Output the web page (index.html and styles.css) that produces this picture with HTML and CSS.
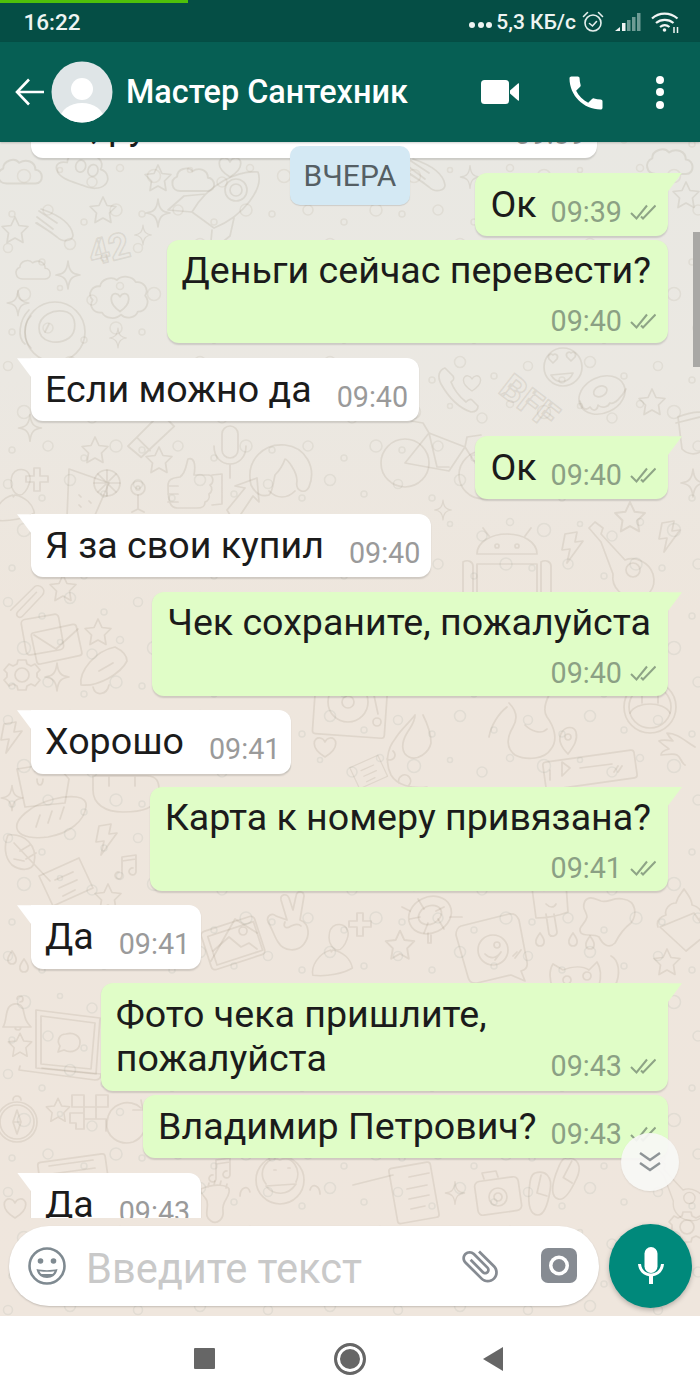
FILE: index.html
```html
<!DOCTYPE html>
<html lang="ru">
<head>
<meta charset="utf-8">
<title>Мастер Сантехник</title>
<link rel="stylesheet" href="styles.css">
</head>
<body>
<div class="phone">
  <div class="status">
    <div class="progress"></div>
    <span class="clock">16:22</span>
    <div class="status-right">
      <span class="more-dots"><i></i><i></i><i></i></span>
      <span class="speed">5,3 КБ/с</span>
      <svg class="st-alarm" width="22" height="22" viewBox="0 0 22 22" fill="none" stroke="#e6efed" stroke-width="1.6"><circle cx="11" cy="12" r="8"/><path d="M7.500 12.500l3 2.500 4-4.500M1.500 5.500L5.500 1.500M20.500 5.500L16.500 1.500" stroke-linecap="round"/></svg>
      <svg class="st-signal" width="28" height="20" viewBox="0 0 28 20"><path d="M1 19l5-4v4z" fill="#f1f5f4"/><rect x="8" y="11" width="3.500" height="8" fill="#f1f5f4"/><rect x="13" y="8" width="3.500" height="11" fill="#6f9c95"/><rect x="18" y="5" width="3.500" height="14" fill="#6f9c95"/><rect x="23" y="1" width="3.500" height="18" fill="#6f9c95"/></svg>
      <svg class="st-wifi" width="28" height="22" viewBox="0 0 28 22" fill="none" stroke="#f1f5f4" stroke-width="2.200"><path d="M1 7.500C8 1 19 1 26.500 7.500M5 12c5-4.300 12.500-4.300 17.500 0M9 16c3-2.400 6.500-2.400 9.500 0"/><circle cx="13.500" cy="19" r="1.800" fill="#f1f5f4" stroke="none"/><path d="M23 16v6M26.500 16v6" stroke-width="1.500"/></svg>
    </div>
  </div>

  <header class="topbar">
    <svg class="back" width="30" height="28" viewBox="0 0 30 28" fill="none" stroke="#fff" stroke-width="2.600"><path d="M29 14H2M14 1.500L2 14l12 12.500"/></svg>
    <svg class="avatar" width="62" height="62" viewBox="0 0 62 62"><defs><clipPath id="av"><circle cx="31" cy="31" r="30.500"/></clipPath></defs><circle cx="31" cy="31" r="30.500" fill="#dfe5e7"/><g clip-path="url(#av)" fill="#fff"><circle cx="31" cy="28" r="11"/><ellipse cx="31" cy="58" rx="22" ry="16"/></g></svg>
    <h1 class="name">Мастер Сантехник</h1>
    <svg class="ic-video" width="38" height="24" viewBox="0 0 38 24" fill="#fff"><rect width="28" height="24" rx="3.500"/><path d="M29 10.500L37 3.500c.5-.4 1-.2 1 .5v16c0 .7-.5.900-1 .5l-8-7z"/></svg>
    <svg class="ic-phone" width="44" height="44" viewBox="0 0 24 24" fill="#fff"><path d="M6.620 10.790c1.440 2.830 3.760 5.140 6.590 6.590l2.200-2.200c.27-.27.67-.36 1.020-.24 1.120.37 2.330.57 3.570.57.55 0 1 .45 1 1V20c0 .55-.45 1-1 1-9.390 0-17-7.610-17-17 0-.55.45-1 1-1h3.500c.55 0 1 .45 1 1 0 1.250.2 2.450.57 3.570.11.35.03.74-.25 1.020l-2.200 2.200z"/></svg>
    <span class="ic-more"><i></i><i></i><i></i></span>
  </header>

  <main class="chat">
    <svg class="doodles" width="700" height="1174" viewBox="0 142 700 1174" aria-hidden="true">
      <defs>
        <path id="star" d="M0-13l4 8.500 9 1-6.500 6.500 1.500 9.500L0 8l-8 4.500 1.500-9.500L-13-3.500l9-1z"/>
        <path id="spark" d="M0-14C1-4 4-1 12 0 4 1 1 4 0 14-1 4-4 1-12 0-4-1-1-4 0-14z"/>
        <path id="cloud" d="M-16 10c-8 0-10-10-3-13 0-7 10-10 14-5 6-4 14-1 14 6 7 0 8 12 0 12z"/>
        <path id="heart" d="M0 10C-16 0-11-10-5-9c2.500.4 4 1.600 5 4 1-2.400 2.500-3.600 5-4 6-1 11 9-5 19z"/>
        <g id="rocket"><path d="M-30 12C-14-16 16-30 36-28c6 16-14 44-44 56zM-30 12l-24-2 16-14 22-2M-10 30l-2 22 20-16 4-18"/><circle cx="14" cy="-10" r="11"/><circle cx="14" cy="-10" r="6"/></g>
        <g id="poo"><path d="M-26 4c-4-6 2-10 8-10-2-10 10-16 18-12 10-4 18 2 16 10 8 0 12 8 8 14-3 5-12 8-22 6-12-1-24-1-28-8z"/><ellipse cx="-4" cy="-6" rx="5" ry="6"/><ellipse cx="9" cy="-5" rx="5" ry="6"/></g>
        <path id="hand" d="M-16-12l18 12M-18-6l16 12M-19 0l16 10M-14-14c12 4 30 12 32 26 0 6-10 8-16 2-8-6-14-10-20-14"/>
        <g id="flower"><path d="M-26 0c-6-6 0-14 7-13 1-7 11-10 16-6 5-5 15-4 18 2 7-1 13 6 9 13 5 6 1 15-7 15-2 6-11 8-16 3-5 5-15 4-18-2-8 1-13-6-9-12z"/><path d="M0 11C-12 3-9-7-4-6c2 .3 3 1.300 4 3 1-1.700 2-2.700 4-3 5-1 8 9-4 17z"/></g>
        <g id="helmet"><circle r="30"/><path d="M-16-4c0-12 14-20 28-16 10 4 10 20 2 26-12 8-30 4-30-10zM-6-8l-4 8M-30 12c-8-6-6-24 4-34M-24 16c-8-8-8-24 0-32"/></g>
        <g id="tube"><path d="M-20 12L10-18l12 12-30 28zM-12 4l12 12"/></g>
        <g id="girl"><path d="M-32 18c-6-26 14-42 34-40 20 2 32 22 24 42-4 8-14 4-12-6 0-10-10-22-12-22-2 6-6 12-10 16-2 8-2 16-6 20-8 2-14-2-18-10z"/><path d="M-14 24c8 8 18 8 26 0"/></g>
        <path id="thumb" d="M-22 6c0-8 6-8 12-9 6-4 6-12 8-18 6-2 8 5 6 16h14c6 0 6 8 2 10 3 3 2 7-1 9 1 4-1 7-4 8 0 5-3 6-8 6h-20c-6 0-9-5-9-22zM22-5l10-1v30l-10 1M-22 6h10M-22 14h10M-22 22h10"/>
        <g id="mic"><rect x="-8" y="-24" width="16" height="32" rx="8"/><path d="M-16-4c0 24 32 24 32 0M0 14v14"/></g>
        <g id="glass"><path d="M-24-18l40 14-14 32-28 2zM-14 8l2 2M-4 14l2 2M-14 18l2 2"/><circle cx="14" cy="-4" r="13"/><path d="M14-17V9M1-4h26M5-13l18 18M23-13L5 5"/></g>
        <path id="plus" d="M-3-12h6v8h8v6h-8v9h-6V2h-8v-6h8z"/>
        <g id="lolli"><circle r="7"/><circle r="2"/><path d="M0 7v14l-6 3M0 21l6 3"/></g>
        <path id="arrow" d="M-14 20l-6-10 18-22-10-2 22-8 2 24-6-6-16 24z"/>
        <g id="person"><path d="M-2-28c10-2 16 6 12 16-2 6-6 12-10 12-6 0-10-8-10-14 0-6 2-12 8-14zM-8 0c-14 4-22 18-20 28 16 2 34-2 44-8-2-10-10-18-22-20-2 3-1 3-2 0"/></g>
        <path id="clip" d="M-20 10L8-14c6-4 14 4 8 10L-8 18c-4 2-8-2-4-6L10-8"/>
        <g id="envelope"><rect x="-28" y="-22" width="38" height="36" rx="4" transform="rotate(-10)"/><rect x="-20" y="-8" width="46" height="32" rx="3" transform="rotate(-12)"/><path d="M-18-2L4 12l22-20"/></g>
        <g id="gear"><circle r="7"/><path d="M-4-15h8l1 4 4 2 4-2 5 6-3 3 0 4 3 3-5 6-4-2-4 2-1 4h-8l-1-4-4-2-4 2-5-6 3-3v-4l-3-3 5-6 4 2 4-2z"/></g>
        <g id="ship"><path d="M-24 18c-2-14 14-34 34-38 8 4 12 8 12 14C16 6-6 20-24 18zM-6 4l14-8"/><path d="M-12 20c2 10 14 8 16-2"/></g>
        <path id="bolt" d="M-8-14l12-2-2 10 8-1-16 22 3-14-8 1z"/>
        <path id="bag" d="M-26-8l38-6 14 16-4 24-40 4zM-8-6c0-14 14-14 16-2M-6 2c0 8 6 8 6 0"/>
        <g id="bread"><path d="M-34 14c-6-10 12-26 36-32 16-4 34-4 32 8-2 14-16 26-38 30-14 2-26 0-30-6zM-12-2l-4 12M0-6l-4 12M12-10l-4 12"/></g>
        <path id="backpack" d="M-30-14h54c10 0 12 6 12 14 0 20-20 22-36 22-18 0-30-8-30-22zM-14-14v10M12-14v10"/>
        <path id="leaf" d="M-14-20c16-2 30 10 26 28-2 8-14 8-22 2-8-8-8-20-4-30zM-8-12L28 26M-2-4l10-6M4 4l10-6M-8 4l10 2"/>
        <g id="card"><path d="M-26-6l40-18 14 30-40 18z"/><path d="M-10-2l18-8M-6 6l18-8M-2 14l12-6"/></g>
        <path id="music" d="M-6 10V-8l14-2V6M-6 10a3.500 3.500 0 1 1-3-3M8 6a3.500 3.500 0 1 1-3-3M-6-4l14-2"/>
        <g id="photos"><rect x="-28" y="-20" width="56" height="40" rx="4" transform="rotate(-18)"/><path d="M-22 18L2-24l22 14"/><rect x="-22" y="-14" width="48" height="30" transform="rotate(-18)"/><path d="M-20 8L-4-6 8 4l8-4 8 6"/><circle cx="10" cy="-12" r="4"/></g>
        <path id="drop" d="M0-7c3 4 5 7 4 10-1 4-7 4-8 0-1-3 1-6 4-10z"/>
        <path id="bell" d="M-14 14c4-6 2-14 6-20 4-5 12-4 14 2 2 8 2 12 8 18zM-2 14c0 4 6 4 6 0M0-14a3 3 0 1 1 3 3"/>
        <g id="laptop"><path d="M-24-30l64 8-4 56-60-6z" /><path d="M-19-24l54 7-4 46-50-5zM-40 26l-1 4 76 10c6 0 6-4 6-6L-18 28"/><path d="M6-6c8-2 14 2 14 8 0 8-8 12-16 8l-6 2 2-6c-4-6 0-12 6-12z"/></g>
        <g id="compass"><circle r="17"/><circle r="20"/><path d="M0-12l4 12-4 12-4-12zM-4 0h8M-4-22a4 4 0 1 1 8 0"/></g>
        <path id="squares" d="M-16-18h12v12h-12zM8-18h12v12H8zM-4-6H8V6H-4zM-18 0h14v16h-8v-6h-6zM8 6h10v12"/>
        <path id="spin" d="M16-14C6-24-16-20-18 0c-2 14 12 24 26 20 10-4 14-14 12-22M16-22l2 10-10 0"/>
        <g id="form"><rect x="-34" y="-14" width="68" height="30" rx="3" transform="rotate(-8)"/><path d="M-24-6l44-6M-22 2l44-6"/></g>
        <g id="monkey"><circle r="24"/><path d="M-14 6c8 10 22 10 30-2zM-14 4c-10-12 2-30 14-24 12-6 22 10 16 22M-6-10h2M8-12h2M-30 12c-2-8-10-4-10 4M30 10c2-8 10-4 10 4"/></g>
        <path id="foot" d="M-16-16c14-6 26-4 28 0 2 8-8 12-6 22 1 8-6 14-12 10-8-5-2-12-4-20-1-4-8-8-6-12zM-8-22l-1 4M-2-24l-1 4M4-24l-1 4M10-21l-1 4"/>
        <g id="heartface"><circle r="19"/><path d="M-12 8c6 10 18 8 22-2zM-14-8c-2-4 2-6 4-4 2-2 6 0 4 4l-4 4zM4-10c-2-4 2-6 4-4 2-2 6 0 4 4l-4 4z"/></g>
        <g id="donut"><ellipse rx="24" ry="18" transform="rotate(-25)"/><ellipse cx="0" cy="-4" rx="7" ry="5" transform="rotate(-25)"/><path d="M-22 6c2 8 6 10 10 6 4 6 8 2 8-2 4 4 10 2 12-2 4 2 12-6 16-14"/></g>
        <path id="handset" d="M-12-22c-6 2-8 8-4 16C-8 8 2 18 14 22c4 0 7-2 7-6l-6-6c-2-2-4 0-6 2C4 8-2 2-6-8c2-2 4-2 2-6z"/>
        <g id="bike"><circle cx="-38" cy="10" r="24"/><circle cx="40" cy="22" r="24"/><path d="M-38 10l24-30 36 14-16 24zM-14-20l8 34 12 0M22-6l18 28M-14-20l-6-10-12-2M22-6l2-10 14-2"/></g>
        <g id="android"><path d="M-30-6c0-12 14-20 30-20s30 8 30 20zM-18-24l-6-8M18-24l6-8M-30 4h60v36h-60zM-44 2c5-3 10 0 10 4v30h-10zM34 2c5-3 10 0 10 4v30h-10z"/><circle cx="-10" cy="-14" r="2"/><circle cx="10" cy="-14" r="2"/></g>
        <g id="guitar"><path d="M-36-32l6-6 8 6-2 6 24 26c10-4 24 2 28 14 4 14-6 26-18 24-12 0-24-10-22-24L-24-18z"/><circle cx="8" cy="10" r="7"/></g>
        <path id="cup" d="M-14-20c10-4 20-6 28-4l-4 38c-6 4-14 4-20-2zM-16-14l32-8"/>
        <g id="camera"><rect x="-22" y="-16" width="44" height="34" rx="5" transform="rotate(-8)"/><circle cx="0" cy="2" r="9"/><circle cx="0" cy="2" r="4"/><path d="M-14-16l-2-6 14-2 2 6"/></g>
        <g id="note"><rect x="-20" y="-28" width="42" height="56" rx="3" transform="rotate(-10)"/><path d="M-4-16l20-4M-6-4l20-4M-4 6l20-4M-2 16l14-3"/><path d="M-60-8l40-10"/></g>
        <path id="flop" d="M-8-24c10-3 18 3 15 18-2 12-5 24-12 24-8 0-10-10-9-24 1-8 1-16 6-18zM-2-22l-4 18 10 3"/>
        <g id="turntable"><rect x="-36" y="-26" width="72" height="52" rx="3" transform="rotate(4)"/><circle cx="-2" cy="-8" r="20"/><circle cx="-2" cy="-8" r="6"/><path d="M22-24l6 28"/><circle cx="27" cy="12" r="4"/></g>
        <path id="snake" d="M-2-32c-6 8-14 14-20 24-8 10-10 24-4 36 6 10 20 14 36 12M6-32c4 8 8 18 8 28-2 10-14 18-22 14-8-4-8-14-2-24 2-4 8-10 8-18M-30 12a4 4 0 1 0 6-8M-18 36a6 6 0 1 1 10 2"/>
        <path id="tail" d="M-14-30c6 6 10 14 4 24-6 10-8 20 2 28 12 6 30 4 36-6 8-10 2-24-4-32-4-6-2-14 2-22M-16-26c-8 6-16 18-18 30M2-8c6 6 16 10 22 4"/>
        <g id="pinmap"><path d="M0 14C-8 6-10-2-6-8c4-6 12-6 14 0 2 8-2 14-8 22z"/><circle cy="-3" r="3"/></g>
        <g id="wheel"><circle r="26"/><circle r="21"/><path d="M-20 6c6-12 34-12 40 0M-8-4V-20M8-4V-20"/></g>
        <g id="voice"><rect x="-46" y="-14" width="92" height="28" rx="3" transform="rotate(-8)"/><path d="M-20-2l-8 8V-8zM-10-2l32-4M-40 0v10M32-4l-4 6M28-4l-4 6"/></g>
        <path id="hand2" d="M22-10c-10-6-18-14-28-14 2 4 4 6 6 8-6-1-12-1-14 0 4 4 8 6 10 8-4 1-8 3-8 6 6 0 12-2 16 0 4 2 4 8 8 10"/>
        <path id="peace" d="M-8-12l-6-20c-1-6 6-7 8-2l4 12 3-14c1-6 8-5 8 0l-4 24c10 4 10 16 4 24-6 8-20 8-26-2-4-6-6-14-10-20-2-6 4-10 8-6zM-10-10c-2 4 0 8 6 4 4-2 8-2 10 0"/>
        <g id="turtle"><ellipse rx="22" ry="18" transform="rotate(-25)"/><ellipse rx="12" ry="9" transform="rotate(-25)"/><path d="M-12-16l6 10M14-8l-8 4M-20 4l10-2M8 4l6 10M-2 8l-4 10M-28-8l8 4M20 2l12 0M-2 18v10h3v-8"/></g>
        <g id="speech"><path d="M-36-24l48-12c6-1 8 2 10 6l8 42c1 5-2 8-6 9l4 10-14-6-34 8c-5 1-8-2-9-6l-12-42c0-4 2-8 5-9z"/><circle cx="-4" cy="0" r="15"/><circle cx="0" cy="-5" r="3"/><path d="M-12 4c6 6 12 4 16-2l-6 8M20 2l-4 4M24 0l-6 8"/></g>
        <g id="popsicle"><path d="M-18-20c10-4 26-4 34-4l2 28c-10 4-24 6-32 6zM-4 6l3 20c2 4 8 2 8-2l-3-18M-4-4c4 4 8 4 10 0"/></g>
        <path id="blob" d="M-22-16c-4 8 2 10 2 16-2 8-10 10-6 16 4 4 12 0 18 4 4 8 10 12 16 6 4-8 8-14 16-20 6-8 6-22-8-24-10-2-14 4-22 2-6-2-12-6-16 0z"/>
        <g id="cupcake"><path d="M-20 2l34-14 14 20-22 18zM-22 2c-2-6 2-10 8-12-2-6 4-12 10-12 2-8 6-10 8-14 4 6 8 10 8 16 8 2 12 8 8 14"/></g>
        <g id="cat"><path d="M-24 8c-4-8-4-18 0-24l10 6c10-4 20-4 26 0l8-8c4 6 4 16 2 24-4 14-40 14-46 2z"/><circle cx="-10" cy="0" r="4"/><circle cx="10" cy="-4" r="4"/><path d="M34-24c8 4 10 18 4 30-4 4-14 4-18 4"/></g>
        <pattern id="dots" width="130" height="118" patternUnits="userSpaceOnUse">
          <circle cx="8" cy="12" r="4.500"/><circle cx="42" cy="26" r="3"/><circle cx="70" cy="8" r="5.500"/><circle cx="104" cy="22" r="3"/><circle cx="24" cy="58" r="6.500"/><circle cx="60" cy="52" r="2.500"/><circle cx="92" cy="64" r="5"/><circle cx="120" cy="50" r="3.500"/><circle cx="12" cy="96" r="3"/><circle cx="48" cy="92" r="5"/><circle cx="84" cy="104" r="3"/><circle cx="116" cy="92" r="6"/>
        </pattern>
      </defs>
      <rect class="dots-fill" y="142" width="700" height="1174"/>
      <g class="lines">
        <use href="#cloud" transform="translate(25 172) scale(1.150)"/><use href="#poo" transform="translate(83 173) rotate(15)"/><use href="#star" transform="translate(158 178)"/><use href="#cloud" transform="translate(198 180) scale(1.100)"/><use href="#heart" transform="translate(230 167)"/><use href="#rocket" transform="translate(222 200)"/>
        <use href="#star" transform="translate(103 210)"/><use href="#spark" transform="translate(158 213)"/><use href="#hand" transform="translate(55 223)"/><use href="#star" transform="translate(15 230)"/><use href="#spark" transform="translate(143 235) scale(.7)"/>
        <text class="doodle-text" transform="translate(92 266) rotate(-14)">42</text>
        <use href="#cloud" transform="translate(37 270) scale(.9)"/><use href="#spark" transform="translate(68 275)"/><use href="#flower" transform="translate(120 300) scale(1.050)"/><use href="#spark" transform="translate(18 303) scale(.9)"/><use href="#helmet" transform="translate(55 332)"/><use href="#spark" transform="translate(118 338) scale(.7)"/>

        <use href="#spark" transform="translate(30 428) scale(.95)"/><use href="#tube" transform="translate(150 433) scale(1.100)"/><use href="#star" transform="translate(95 450)"/><use href="#mic" transform="translate(230 450)"/><use href="#star" transform="translate(159 460)"/><use href="#girl" transform="translate(283 467)"/><use href="#thumb" transform="translate(190 480)"/><use href="#glass" transform="translate(93 487)"/><use href="#plus" transform="translate(37 480)"/><use href="#lolli" transform="translate(138 488)"/><use href="#arrow" transform="translate(247 500)"/><use href="#person" transform="translate(20 495) scale(.9)"/>

        <use href="#heartface" transform="translate(563 367)"/><use href="#donut" transform="translate(602 395)"/><use href="#handset" transform="translate(457 390)"/><use href="#heart" transform="translate(472 383) scale(.8)"/>
        <text class="doodle-text" transform="translate(497 392) rotate(38)">BFF</text>
        <use href="#star" transform="translate(652 402)"/><use href="#bike" transform="translate(443 453)"/><use href="#spark" transform="translate(693 483)"/><use href="#star" transform="translate(630 517) scale(1.150)"/><use href="#android" transform="translate(507 560)"/><use href="#guitar" transform="translate(625 560)"/><use href="#bolt" transform="translate(670 537)"/><use href="#bolt" transform="translate(573 548)"/><use href="#cup" transform="translate(692 437)"/><use href="#spark" transform="translate(443 510) scale(.7)"/>

        <use href="#spark" transform="translate(470 177) scale(.8)"/><use href="#hand" transform="translate(427 173)"/><use href="#cloud" transform="translate(675 162) scale(1.200)"/><use href="#star" transform="translate(686 195)"/>
        <use href="#clip" transform="translate(28 600) rotate(-4) scale(.9)"/><use href="#star" transform="translate(63 588)"/><use href="#envelope" transform="translate(52 637)"/><use href="#star" transform="translate(98 632)"/><use href="#gear" transform="translate(22 675)"/><use href="#spark" transform="translate(57 677)"/><use href="#ship" transform="translate(105 667)"/>

        <use href="#bolt" transform="translate(12 738)"/><use href="#bag" transform="translate(43 777)"/><use href="#spark" transform="translate(12 798) scale(.9)"/><use href="#bread" transform="translate(52 817)"/><use href="#backpack" transform="translate(123 790)"/><use href="#bolt" transform="translate(107 840)"/><use href="#leaf" transform="translate(22 855)"/><use href="#card" transform="translate(65 882)"/><use href="#music" transform="translate(128 865)"/><use href="#star" transform="translate(108 897)"/>

        <use href="#turntable" transform="translate(350 710)"/><use href="#heart" transform="translate(325 747)"/><use href="#card" transform="translate(368 772) scale(.7)"/><use href="#snake" transform="translate(417 747)"/><use href="#tail" transform="translate(523 733)"/><use href="#pinmap" transform="translate(568 740)"/><use href="#wheel" transform="translate(650 707)"/><use href="#voice" transform="translate(590 770)"/><use href="#hand2" transform="translate(673 757)"/>

        <use href="#photos" transform="translate(233 943)"/><use href="#peace" transform="translate(295 932)"/><use href="#person" transform="translate(338 950) scale(.9)"/><use href="#plus" transform="translate(360 925)"/><use href="#turtle" transform="translate(430 915)"/><use href="#star" transform="translate(400 945) scale(1.100)"/><use href="#speech" transform="translate(497 950)"/><use href="#popsicle" transform="translate(550 908)"/><use href="#blob" transform="translate(607 917)"/><use href="#cupcake" transform="translate(680 925)"/><use href="#star" transform="translate(667 962)"/><use href="#cat" transform="translate(577 980)"/><use href="#drop" transform="translate(540 940)"/><use href="#drop" transform="translate(573 940)"/><use href="#drop" transform="translate(590 943)"/>

        <use href="#drop" transform="translate(12 958)"/><use href="#drop" transform="translate(24 966)"/><use href="#bell" transform="translate(17 1013)"/><use href="#laptop" transform="translate(60 1040)"/><use href="#star" transform="translate(20 1045) scale(.9)"/><use href="#compass" transform="translate(17 1122)"/><use href="#star" transform="translate(58 1110) scale(.9)"/><use href="#squares" transform="translate(88 1113)"/><use href="#spin" transform="translate(125 1122)"/><use href="#form" transform="translate(73 1172)"/><use href="#monkey" transform="translate(280 1180)"/><use href="#music" transform="translate(222 1168)"/><use href="#foot" transform="translate(217 1205)"/><use href="#heart" transform="translate(15 1208)"/>

        <use href="#camera" transform="translate(498 1195)"/><use href="#note" transform="translate(413 1193)"/><use href="#spark" transform="translate(455 1193) scale(.8)"/><use href="#flop" transform="translate(543 1197)"/><use href="#flop" transform="translate(568 1183) rotate(15)"/><use href="#guitar" transform="translate(683 1190) scale(.8)"/><use href="#gear" transform="translate(687 1227)"/>
      </g>
    </svg>

    <div class="list">
      <div class="date">ВЧЕРА</div>

      <div class="bubble in first-clipped"><span class="text">Ок, руб</span><span class="meta"><span class="time">09:39</span></span></div>

      <div class="bubble out tail group"><span class="text">Ок</span><span class="meta"><span class="time">09:39</span><svg class="ticks"><use href="#ticks-shape"/></svg></span></div>
      <div class="bubble out stack"><span class="text">Деньги сейчас перевести?</span><span class="meta"><span class="time">09:40</span><svg class="ticks"><use href="#ticks-shape"/></svg></span></div>

      <div class="bubble in tail group"><span class="text">Если можно да</span><span class="meta"><span class="time">09:40</span></span></div>

      <div class="bubble out tail group"><span class="text">Ок</span><span class="meta"><span class="time">09:40</span><svg class="ticks"><use href="#ticks-shape"/></svg></span></div>

      <div class="bubble in tail group"><span class="text">Я за свои купил</span><span class="meta"><span class="time">09:40</span></span></div>

      <div class="bubble out tail group stack"><span class="text">Чек сохраните, пожалуйста</span><span class="meta"><span class="time">09:40</span><svg class="ticks"><use href="#ticks-shape"/></svg></span></div>

      <div class="bubble in tail group"><span class="text">Хорошо</span><span class="meta"><span class="time">09:41</span></span></div>

      <div class="bubble out tail group tight stack"><span class="text">Карта к номеру привязана?</span><span class="meta"><span class="time">09:41</span><svg class="ticks"><use href="#ticks-shape"/></svg></span></div>

      <div class="bubble in tail group"><span class="text">Да</span><span class="meta"><span class="time">09:41</span></span></div>

      <div class="bubble out tail group wrapped"><span class="text">Фото чека пришлите,<br>пожалуйста</span><span class="meta"><span class="time">09:43</span><svg class="ticks"><use href="#ticks-shape"/></svg></span></div>
      <div class="bubble out"><span class="text">Владимир Петрович?</span><span class="meta"><span class="time">09:43</span><svg class="ticks"><use href="#ticks-shape"/></svg></span></div>

      <div class="bubble in tail group"><span class="text">Да</span><span class="meta"><span class="time">09:43</span></span></div>
    </div>

    <div class="composer">
      <div class="pill">
        <svg class="ic-emoji" width="38" height="38" viewBox="0 0 38 38"><circle cx="19" cy="19" r="17.500" fill="none" stroke="#7f8a91" stroke-width="2.600"/><circle cx="12.500" cy="14" r="2.800" fill="#7f8a91"/><circle cx="25.500" cy="14" r="2.800" fill="#7f8a91"/><path d="M8.500 22c6 1.500 15 1.500 21 0-1 6-5 9-10.500 9S9.500 28 8.500 22z" fill="#7f8a91"/><path d="M11.500 24.200c5 .8 10 .8 15 0-.6 1.300-1.300 2.200-2 2.800h-11c-.8-.6-1.500-1.500-2-2.800z" fill="#fff"/></svg>
        <span class="placeholder">Введите текст</span>
        <svg class="ic-clip" width="44" height="44" viewBox="0 0 24 24" fill="#868b92"><path transform="rotate(-45 12 12)" d="M16.500 6v11.500c0 2.210-1.790 4-4 4s-4-1.790-4-4V5c0-1.380 1.120-2.500 2.500-2.500s2.500 1.120 2.500 2.500v10.500c0 .55-.45 1-1 1s-1-.45-1-1V6H10v9.500c0 1.380 1.120 2.500 2.500 2.500s2.500-1.120 2.500-2.500V5c0-2.210-1.790-4-4-4S7 2.790 7 5v12.500c0 3.040 2.460 5.500 5.500 5.500s5.500-2.460 5.500-5.500V6h-1.500z"/></svg>
        <svg class="ic-cam" width="36" height="36" viewBox="0 0 36 36"><rect width="36" height="35" rx="7" fill="#868b92"/><circle cx="18" cy="17.500" r="10" fill="#fff"/><circle cx="18" cy="17.500" r="6.500" fill="#868b92"/></svg>
      </div>
      <button class="fab" type="button" aria-label="Голосовое сообщение">
        <svg width="28" height="38" viewBox="0 0 28 38" fill="#fff"><rect x="7.500" y="0" width="13" height="26" rx="6.500"/><path d="M1 17h3c.5 6 5 9.500 10 9.500S23.500 23 24 17h3c-.5 7-5.500 11.500-11 12.300V37h-4v-7.700C6.500 28.500 1.500 24 1 17z"/></svg>
      </button>
    </div>

    <div class="scrollbar"></div>
    <div class="jump">
      <svg width="24" height="22" viewBox="0 0 24 22" fill="none" stroke="#8e9497" stroke-width="2.400"><path d="M2 2l10 7 10-7M2 12l10 7 10-7"/></svg>
    </div>
  </main>

  <nav class="navbar">
    <span class="nav-square"></span>
    <span class="nav-home"></span>
    <span class="nav-back"></span>
  </nav>
</div>

<svg class="defs-only" width="0" height="0" aria-hidden="true">
  <defs>
    <g id="ticks-shape" fill="none" stroke="#8ea486" stroke-width="2"><path d="M1 9l5.500 5.500L17 1.500M11 12.500l2 2L25.500 1.500"/></g>
  </defs>
</svg>
</body>
</html>
```

FILE: styles.css
```css
* { box-sizing: border-box; }
html, body { margin: 0; padding: 0; }
body { width: 700px; height: 1400px; overflow: hidden; font-family: Roboto, "Noto Sans", sans-serif; background: #fff; }
i { display: block; font-style: normal; }

.phone { width: 700px; height: 1400px; display: flex; flex-direction: column; }

.status { position: relative; height: 42px; flex: none; background: #054e45; color: #eef4f2; display: flex; align-items: center; justify-content: space-between; padding: 2px 21px 0 23.500px; }
.progress { position: absolute; left: 0; top: 0; width: 188px; height: 3px; background: #4fc10a; }
.clock { font-size: 22.500px; font-weight: 500; }
.status-right { display: flex; align-items: center; }
.more-dots { display: flex; gap: 2.500px; margin-right: 4px; margin-top: 6px; }
.more-dots i { width: 6px; height: 6px; border-radius: 50%; background: #eef4f2; }
.speed { font-size: 21px; font-weight: 500; margin-right: 6px; }
.st-alarm { margin-right: 10px; }
.st-signal { margin-right: 9px; }

.topbar { height: 100px; flex: none; background: #065f54; display: flex; align-items: center; padding-left: 15px; position: relative; z-index: 2; box-shadow: 0 1px 2px rgba(0,0,0,.2); }
.back { flex: none; }
.avatar { flex: none; margin-left: 6px; }
.name { margin: 0 0 0 13px; font-size: 32.400px; font-weight: 500; color: #fff; flex: 1; white-space: nowrap; }
.ic-video { flex: none; margin-right: 45px; }
.ic-phone { flex: none; margin-right: 48px; margin-top: 1px; }
.ic-more { flex: none; display: flex; flex-direction: column; gap: 4.500px; margin-right: 36px; }
.ic-more i { width: 8px; height: 8px; border-radius: 50%; background: #fff; }

.chat { position: relative; flex: 1; min-height: 0; display: flex; flex-direction: column; background: linear-gradient(180deg, #e9e8e3 0%, #ebe8e2 20%, #eee6dd 40%, #efe6dd 100%); }
.doodles { position: absolute; left: 0; top: 0; }
.dots-fill { fill: url(#dots); opacity: .7; }
#dots circle { fill: none; stroke: #dcd8cf; stroke-width: 1.600; }
.lines { fill: none; stroke: rgba(120,108,88,.13); stroke-width: 1.700; stroke-linejoin: round; stroke-linecap: round; }
.doodle-text { font-family: Roboto, sans-serif; font-size: 36px; font-weight: 700; }

.list { position: relative; height: 1076px; flex: none; overflow: hidden; display: flex; flex-direction: column; align-items: flex-start; }

.date { position: absolute; left: 290px; top: 4px; z-index: 1; width: 120px; height: 59px; display: flex; align-items: center; justify-content: center; background: #d4e9f4; color: #555f64; border-radius: 10px; font-size: 30px; box-shadow: 0 1px 1px rgba(0,0,0,.12); }

.bubble { position: relative; flex: none; display: flex; align-items: flex-end; border-radius: 12px; padding: 9px 12px 10.300px 15px; color: #1b1b1b; font-size: 37.600px; line-height: 44px; box-shadow: 0 1.500px 1.500px rgba(0,0,0,.13); margin-top: 4px; }
.bubble.group { margin-top: 14.700px; }
.bubble.tight { margin-top: 13.500px; }
.bubble .text { white-space: nowrap; }
.meta { display: flex; align-items: center; height: 34px; flex: none; }
.time { font-size: 28.700px; line-height: 34px; }
.ticks { width: 26px; height: 16px; margin-left: 8px; }

.out { background: #e0fdc7; align-self: flex-end; margin-right: 32px; }
.out .meta { margin-left: 14px; margin-bottom: -3px; }
.out .time { color: #8ba084; }
.in { background: #fff; margin-left: 31px; padding-left: 14px; padding-right: 11px; }
.in .meta { margin-left: 25px; margin-bottom: -3px; }
.in .time { color: #9a9a9a; }

.stack { flex-direction: column; align-items: stretch; padding: 8px 12px 5.500px 15px; }
.stack .text { padding-right: 5px; }
.stack .meta { align-self: flex-end; margin: 12px 0 0; }
.wrapped .meta { margin-left: 64px; }

.tail.out { border-top-right-radius: 0; }
.tail.in { border-top-left-radius: 0; }
.tail::after { content: ""; position: absolute; top: 0; width: 15px; height: 20px; }
.tail.out::after { right: -14px; background: #e0fdc7; clip-path: polygon(0 0, 100% 0, 0 100%); }
.tail.in::after { left: -14px; background: #fff; clip-path: polygon(0 0, 100% 0, 100% 100%); }

.first-clipped { margin-top: -47.300px; width: 566px; justify-content: space-between; }
.first-clipped .meta { margin-left: 0; }

.composer { flex: 1; display: flex; align-items: flex-start; padding: 8px 8px 0 9px; gap: 10px; position: relative; }
.pill { width: 590px; height: 80px; flex: none; background: #fff; border-radius: 40px; display: flex; align-items: center; padding: 0 22px 0 19px; box-shadow: 0 1px 2px rgba(0,0,0,.18); }
.ic-emoji { flex: none; }
.placeholder { flex: 1; margin-left: 20px; padding-top: 4px; font-size: 41.600px; color: #c9c9c9; white-space: nowrap; }
.ic-clip { flex: none; margin-right: 39px; }
.ic-cam { flex: none; }
.fab { width: 83px; height: 84px; flex: none; margin-top: -2px; border: 0; padding: 0; border-radius: 50%; background: #00897b; display: flex; align-items: center; justify-content: center; box-shadow: 0 2px 5px rgba(0,0,0,.25); }

.scrollbar { position: absolute; right: 0; top: 90px; width: 7px; height: 135px; background: #a9a8a5; }
.jump { position: absolute; left: 621px; top: 991px; width: 58px; height: 58px; border-radius: 50%; background: rgba(247,247,245,.93); display: flex; align-items: center; justify-content: center; box-shadow: 0 1px 2px rgba(0,0,0,.08); z-index: 3; }

.navbar { height: 84px; flex: none; background: #fff; position: relative; display: flex; align-items: center; padding-top: 1px; }
.nav-square { width: 21px; height: 21px; border-radius: 1px; background: #666; margin-left: 194px; }
.nav-home { width: 32px; height: 32px; border-radius: 50%; background: #666; border: 3px solid #666; box-shadow: inset 0 0 0 3px #fff; margin-left: 119px; }
.nav-back { width: 0; height: 0; border-style: solid; border-width: 12px 20px 12px 0; border-color: transparent #666 transparent transparent; margin-left: 117px; }

.defs-only { position: absolute; }
```
